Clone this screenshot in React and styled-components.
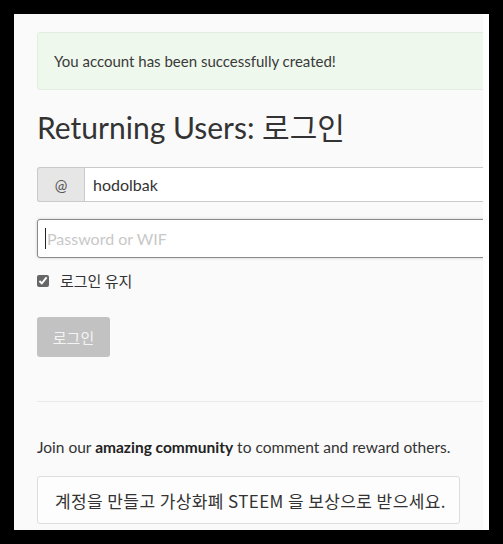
import React from "react";
import styled, { createGlobalStyle } from "styled-components";

const Global = createGlobalStyle`
  html, body { margin: 0; padding: 0; background: #000; }
  body { font-family: Lato, "Noto Sans CJK KR", sans-serif; color: #333; }
  * { box-sizing: border-box; }
`;

const Frame = styled.div`
  width: 503px;
  height: 544px;
  padding: 14px;
  background: #000;
`;

const Panel = styled.div`
  display: flex;
  width: 475px;
  height: 516px;
  background: #fff;
  overflow: hidden;
`;

const Content = styled.div`
  width: 469px;
  flex: none;
  background: #fafafa;
  padding: 18px 0 0 23px;
  overflow: hidden;
`;

const Strip = styled.div`
  flex: 1;
  background: #fff;
`;

const Alert = styled.div`
  height: 58px;
  width: 470px;
  display: flex;
  align-items: center;
  padding-left: 16px;
  background: #eff8ec;
  border: 1px solid #e2eedf;
  border-radius: 3px;
  font-size: 15px;
  color: #3a3a3a;
`;

const Heading = styled.h3`
  margin: 17px 0 0;
  font-size: 30px;
  line-height: 40px;
  font-weight: 400;
  color: #333;
`;

const InputGroup = styled.div`
  display: flex;
  margin-top: 20px;
  height: 35px;
  width: 470px;
`;

const Addon = styled.span`
  width: 47px;
  flex: none;
  display: flex;
  align-items: center;
  justify-content: center;
  background: #e6e6e6;
  border: 1px solid #cacaca;
  border-right: none;
  border-radius: 3px 0 0 3px;
  font-size: 15px;
  color: #555;
`;

const TextInput = styled.input`
  flex: 1;
  min-width: 0;
  height: 100%;
  border: 1px solid #cacaca;
  background: #fff;
  padding: 0 8px;
  font-family: Lato, sans-serif;
  font-size: 16px;
  color: #333;
  outline: none;
`;

const PasswordWrap = styled.div`
  position: relative;
  margin-top: 17px;
  width: 470px;
  height: 39px;
`;

const PasswordInput = styled.input`
  width: 100%;
  height: 100%;
  border: 1px solid #8a8a8a;
  border-radius: 3px;
  background: #fff;
  padding: 0 9px;
  font-family: Lato, sans-serif;
  font-size: 16px;
  color: #333;
  outline: none;
  box-shadow: 0 0 3px #cacaca;
  &::placeholder { color: #c8c8c8; }
`;

const Caret = styled.span`
  position: absolute;
  left: 8px;
  top: 9px;
  width: 1px;
  height: 21px;
  background: #222;
`;

const CheckRow = styled.label`
  display: flex;
  align-items: center;
  gap: 11px;
  margin-top: 12px;
  font-family: "Noto Sans CJK KR", sans-serif;
  font-size: 15px;
  color: #333;
  & input { margin: 0; width: 12px; height: 12px; accent-color: #666; }
`;

const Button = styled.button`
  margin-top: 26px;
  width: 73px;
  height: 40px;
  border: none;
  border-radius: 3px;
  background: #c2c2c2;
  color: #f4f4f4;
  font-family: "Noto Sans CJK KR", sans-serif;
  font-size: 15px;
  padding: 0;
`;

const Divider = styled.hr`
  margin: 44px 0 0;
  border: none;
  border-top: 1px solid #e9e9e9;
  width: 446px;
`;

const Join = styled.p`
  margin: 33px 0 0;
  font-size: 15.5px;
  line-height: 24px;
  color: #333;
  & strong { color: #222; font-weight: 700; }
`;

const Callout = styled.div`
  margin-top: 17px;
  width: 423px;
  height: 48px;
  display: flex;
  align-items: center;
  padding-left: 17px;
  border: 1px solid #dddddd;
  border-radius: 3px;
  background: #fdfdfd;
  font-family: "Noto Sans CJK KR", sans-serif;
  font-size: 17px;
  letter-spacing: 0.4px;
  color: #333;
`;

export default function App() {
  return (
    <>
      <Global />
      <Frame>
        <Panel>
          <Content>
            <Alert>You account has been successfully created!</Alert>
            <Heading>Returning Users: 로그인</Heading>
            <InputGroup>
              <Addon>@</Addon>
              <TextInput defaultValue="hodolbak" />
            </InputGroup>
            <PasswordWrap>
              <PasswordInput type="password" placeholder="Password or WIF" />
              <Caret />
            </PasswordWrap>
            <CheckRow>
              <input type="checkbox" defaultChecked />
              로그인 유지
            </CheckRow>
            <Button>로그인</Button>
            <Divider />
            <Join>
              Join our <strong>amazing community</strong> to comment and reward others.
            </Join>
            <Callout>계정을 만들고 가상화폐 STEEM 을 보상으로 받으세요.</Callout>
          </Content>
          <Strip />
        </Panel>
      </Frame>
    </>
  );
}
